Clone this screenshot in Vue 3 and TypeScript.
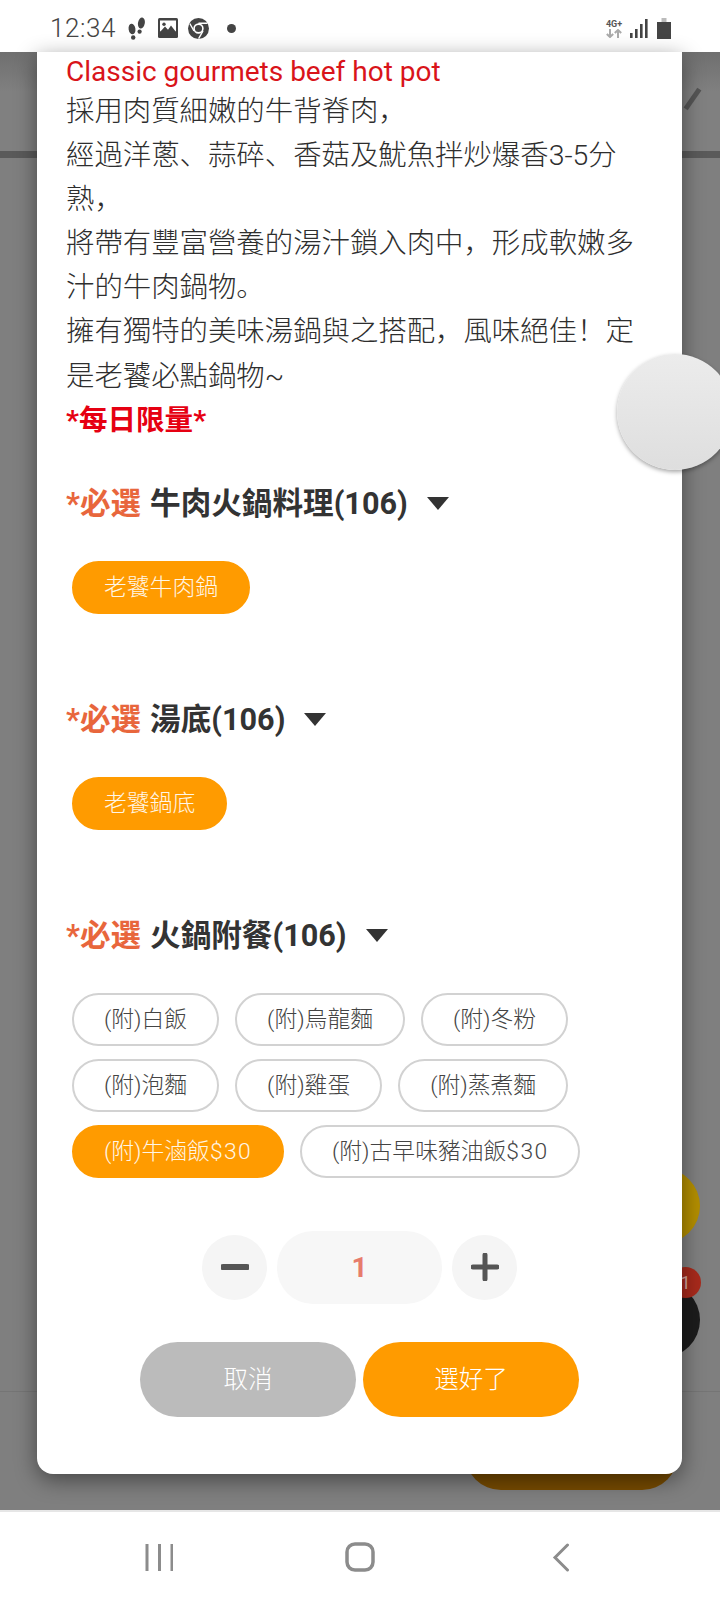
<script setup lang="ts">
import { ref } from 'vue';

interface OptionItem {
  label: string;
  price?: string;
  selected?: boolean;
}

interface OptionGroup {
  name: string;
  options: OptionItem[];
}

const intro: string[] = [
  '採用肉質細嫩的牛背脊肉\uFF0C',
  '經過洋蔥、蒜碎、香菇及魷魚拌炒爆香3-5分熟\uFF0C',
  '將帶有豐富營養的湯汁鎖入肉中\uFF0C形成軟嫩多汁的牛肉鍋物。',
  '擁有獨特的美味湯鍋與之搭配\uFF0C風味絕佳\uFF01定是老饕必點鍋物~',
];

const groups: OptionGroup[] = [
  { name: '牛肉火鍋料理(106)', options: [{ label: '老饕牛肉鍋', selected: true }] },
  { name: '湯底(106)', options: [{ label: '老饕鍋底', selected: true }] },
  {
    name: '火鍋附餐(106)',
    options: [
      { label: '(附)白飯' },
      { label: '(附)烏龍麵' },
      { label: '(附)冬粉' },
      { label: '(附)泡麵' },
      { label: '(附)雞蛋' },
      { label: '(附)蒸煮麵' },
      { label: '(附)牛滷飯', price: '$30', selected: true },
      { label: '(附)古早味豬油飯', price: '$30' },
    ],
  },
];

const quantity = ref<number>(1);
</script>

<template>
  <div class="phone">
    <!-- 狀態列 -->
    <header class="status-bar">
      <span class="clock">12:34</span>
      <svg class="ico-steps" width="19" height="23" viewBox="0 0 19 23" fill="#444">
        <ellipse cx="5" cy="12" rx="3.4" ry="5.4" transform="rotate(-8 5 12)" />
        <ellipse cx="6.2" cy="20.5" rx="2.2" ry="2.3" />
        <ellipse cx="14.4" cy="6" rx="3.4" ry="5.6" transform="rotate(10 14.4 6)" />
        <ellipse cx="12.6" cy="14.6" rx="2.1" ry="2.2" />
      </svg>
      <svg class="ico-image" width="20" height="20" viewBox="0 0 20 20">
        <rect width="20" height="20" rx="1.5" fill="#444" />
        <rect x="2" y="2.5" width="16" height="11" fill="#fff" />
        <circle cx="6" cy="6.2" r="1.7" fill="#444" />
        <path d="M2 14 7 8.5l3 3.2 3-4.2 5 6.5z" fill="#444" />
      </svg>
      <svg class="ico-chrome" width="21" height="21" viewBox="0 0 21 21">
        <circle cx="10.5" cy="10.5" r="10.5" fill="#444" />
        <circle cx="10.5" cy="10.5" r="4.4" fill="#444" stroke="#fff" stroke-width="1.6" />
        <path d="M10.5 5.2h9M6 13 1.8 5.5M15 13l-4.400 7.600" stroke="#fff" stroke-width="1.4" fill="none" />
      </svg>
      <span class="dot"></span>
      <span class="spacer"></span>
      <span class="net">
        <b>4G+</b>
        <svg width="18" height="9" viewBox="0 0 18 9" fill="none" stroke="#aaa" stroke-width="2">
          <path d="M5 0v8M1.800 5 5 8l3.200-3M13 9V1M9.800 4 13 1l3.200 3" />
        </svg>
      </span>
      <svg class="ico-signal" width="18" height="19" viewBox="0 0 18 19" fill="#444">
        <rect x="0" y="14" width="2.600" height="5" />
        <rect x="5" y="10" width="2.600" height="9" />
        <rect x="10" y="5" width="2.600" height="14" />
        <rect x="15" y="0" width="2.600" height="19" />
      </svg>
      <svg class="ico-battery" width="14" height="21" viewBox="0 0 14 21">
        <rect x="4.500" y="0" width="5" height="4" fill="#bbb" />
        <rect x="0" y="4" width="14" height="17" fill="#444" />
      </svg>
    </header>

    <main class="backdrop">
      <!-- 被遮罩蓋住的頁面 -->
      <div class="under-header"></div>
      <span class="under-pencil"></span>
      <span class="under-fab under-fab--yellow"></span>
      <span class="under-fab under-fab--black"></span>
      <span class="under-badge">1</span>
      <div class="under-footer">
        <span class="under-submit"></span>
      </div>

      <section class="modal">
        <p class="title-en">Classic gourmets beef hot pot</p>
        <p v-for="line in intro" :key="line" class="intro">{{ line }}</p>
        <p class="limit">*每日限量*</p>

        <div v-for="group in groups" :key="group.name" class="group">
          <h3 class="group-title">
            <em>*必選</em>
            <span>{{ group.name }}</span>
            <i class="caret"></i>
          </h3>
          <div class="chips">
            <button
              v-for="opt in group.options"
              :key="opt.label"
              class="chip"
              :class="{ 'chip--on': opt.selected }"
            >{{ opt.label }}<span v-if="opt.price" class="price">{{ opt.price }}</span></button>
          </div>
        </div>

        <div class="stepper">
          <button class="round">
            <svg width="28" height="28" viewBox="0 0 28 28"><path d="M2 14h24" stroke="#555" stroke-width="6" stroke-linecap="round" /></svg>
          </button>
          <div class="count">{{ quantity }}</div>
          <button class="round">
            <svg width="28" height="28" viewBox="0 0 28 28"><path d="M2 14h24M14 2v24" stroke="#555" stroke-width="5" stroke-linecap="round" /></svg>
          </button>
        </div>

        <div class="actions">
          <button class="action action--cancel">取消</button>
          <button class="action action--ok">選好了</button>
        </div>
      </section>
    </main>

    <!-- 導覽列 -->
    <nav class="nav-bar">
      <svg width="28" height="29" viewBox="0 0 28 29" fill="none" stroke="#8c8c8c" stroke-width="3">
        <path d="M2 1v27M14.500 1v27M27 1v27" />
      </svg>
      <svg width="30" height="30" viewBox="0 0 30 30" fill="none" stroke="#8c8c8c" stroke-width="3.500">
        <rect x="2" y="2" width="26" height="26" rx="8" />
      </svg>
      <svg width="18" height="29" viewBox="0 0 18 29" fill="none" stroke="#8c8c8c" stroke-width="3" stroke-linecap="round">
        <path d="M15.500 2 3 14.500 15.500 27" />
      </svg>
    </nav>

    <!-- 浮動按鈕 -->
    <span class="assistive"></span>
  </div>
</template>

<style scoped>
.phone {
  position: relative;
  width: 720px;
  height: 1600px;
  overflow: hidden;
  display: flex;
  flex-direction: column;
  background: #fff;
  font-family: Roboto, "Noto Sans CJK SC", sans-serif;
  color: #333;
}

.status-bar {
  height: 52px;
  flex: none;
  display: flex;
  align-items: center;
  padding: 4px 49px 0 50px;
  box-sizing: border-box;
}

.clock {
  font-size: 26px;
  font-weight: 300;
  color: #444;
  letter-spacing: 0.6px;
  width: 77px;
}

.ico-image {
  margin-left: 12px;
}

.ico-chrome {
  margin-left: 10px;
}

.dot {
  width: 9px;
  height: 9px;
  border-radius: 50%;
  background: #444;
  margin-left: 18px;
}

.spacer {
  flex: 1;
}

.net {
  display: flex;
  flex-direction: column;
  align-items: center;
  width: 20px;
  margin-right: 6px;
}

.net b {
  font-size: 9px;
  line-height: 10px;
  font-weight: 700;
  color: #555;
}

.ico-battery {
  margin-left: 9px;
}

.backdrop {
  position: relative;
  flex: 1;
  display: flex;
  flex-direction: column;
  justify-content: space-between;
  background: #7f7f7f;
  border-bottom: 2px solid #e6e6e6;
  min-height: 0;
}

.under-header {
  height: 106px;
  box-sizing: border-box;
  border-bottom: 7px solid #5a5a5a;
  background: linear-gradient(#6f6f6f, #808080 40%);
}

.under-pencil {
  position: absolute;
  left: 690px;
  top: 35px;
  width: 5px;
  height: 24px;
  background: #555;
  transform: rotate(35deg);
}

.under-fab {
  position: absolute;
  border-radius: 50%;
  width: 76px;
  height: 76px;
  left: 624px;
}

.under-fab--yellow {
  top: 1116px;
  background: #b38e00;
}

.under-fab--black {
  top: 1230px;
  background: #1c1c1c;
}

.under-badge {
  position: absolute;
  left: 670px;
  top: 1215px;
  width: 31px;
  height: 31px;
  border-radius: 50%;
  background: #a82a1c;
  color: #d8a8a0;
  font-size: 18px;
  line-height: 31px;
  text-align: center;
}

.under-footer {
  position: relative;
  height: 118px;
  border-top: 1px solid #757575;
}

.under-submit {
  position: absolute;
  left: 465px;
  right: 42px;
  bottom: 20px;
  height: 60px;
  border-radius: 0 0 36px 36px;
  background: #774b00;
}

.modal {
  position: absolute;
  left: 37px;
  top: 0;
  width: 645px;
  height: 1422px;
  box-sizing: border-box;
  padding: 2px 29px 0;
  background: #fff;
  border-radius: 0 0 16px 16px;
  box-shadow: 0 6px 22px rgba(0, 0, 0, 0.45);
}

.title-en {
  margin: 0;
  font-size: 28px;
  line-height: 36px;
  color: #d9141a;
}

.intro {
  margin: 0;
  max-width: 575px;
  font-size: 28.400px;
  line-height: 44.100px;
  color: #2e2e2e;
  font-weight: 300;
}

.limit {
  margin: 0;
  font-size: 28.560px;
  line-height: 44px;
  font-weight: 700;
  color: #e60012;
}

.group {
  margin-top: 39px;
}

.group + .group {
  margin-top: 84px;
}

.group-title {
  margin: 0;
  display: flex;
  align-items: center;
  font-size: 30.600px;
  line-height: 44px;
  font-weight: 700;
  color: #333;
}

.group-title em {
  font-style: normal;
  color: #e8663c;
  margin-right: 9px;
}

.caret {
  margin-left: 19px;
  width: 0;
  height: 0;
  border-left: 11px solid transparent;
  border-right: 11px solid transparent;
  border-top: 13px solid #333;
}

.chips {
  display: flex;
  flex-wrap: wrap;
  gap: 13px 16px;
  margin-top: 35px;
  padding-left: 6px;
}

.chip {
  height: 53px;
  box-sizing: border-box;
  padding: 0 30px 4px;
  border: 2px solid #d2d2d2;
  border-radius: 27px;
  background: #fff;
  font-family: inherit;
  font-size: 22.800px;
  font-weight: 300;
  color: #444;
  white-space: nowrap;
}

.chip--on {
  background: #ff9b00;
  border-color: #ff9b00;
  color: #fff6e6;
}

.price {
  letter-spacing: 1.400px;
}

.stepper {
  display: flex;
  align-items: center;
  justify-content: center;
  gap: 10px;
  margin-top: 53px;
}

.round {
  width: 65px;
  height: 65px;
  padding: 0;
  border: 0;
  border-radius: 50%;
  background: #f5f5f5;
  display: flex;
  align-items: center;
  justify-content: center;
}

.count {
  width: 165px;
  height: 73px;
  border-radius: 36px;
  background: #f7f7f7;
  display: flex;
  align-items: center;
  justify-content: center;
  font-size: 28px;
  font-weight: 700;
  color: #e77c6c;
}

.actions {
  display: flex;
  justify-content: center;
  gap: 7px;
  margin-top: 38px;
}

.action {
  width: 216px;
  height: 75px;
  padding: 0 0 4px;
  border: 0;
  border-radius: 38px;
  font-family: inherit;
  font-size: 24.500px;
  font-weight: 300;
  color: #fff;
}

.action--cancel {
  background: #bbb;
}

.action--ok {
  background: #ff9b00;
}

.nav-bar {
  height: 88px;
  flex: none;
  display: grid;
  grid-template-columns: 201px 201px 201px;
  justify-content: center;
  justify-items: center;
  align-items: center;
  padding: 2px 0 0;
  box-sizing: border-box;
  background: #fff;
}

.assistive {
  position: absolute;
  left: 617px;
  top: 354px;
  width: 116px;
  height: 116px;
  border-radius: 50%;
  background: linear-gradient(#ececec, #dedede);
  box-shadow: 0 2px 4px rgba(0, 0, 0, 0.35);
}
</style>

<style>
html,
body {
  margin: 0;
  background: #fff;
}
</style>
